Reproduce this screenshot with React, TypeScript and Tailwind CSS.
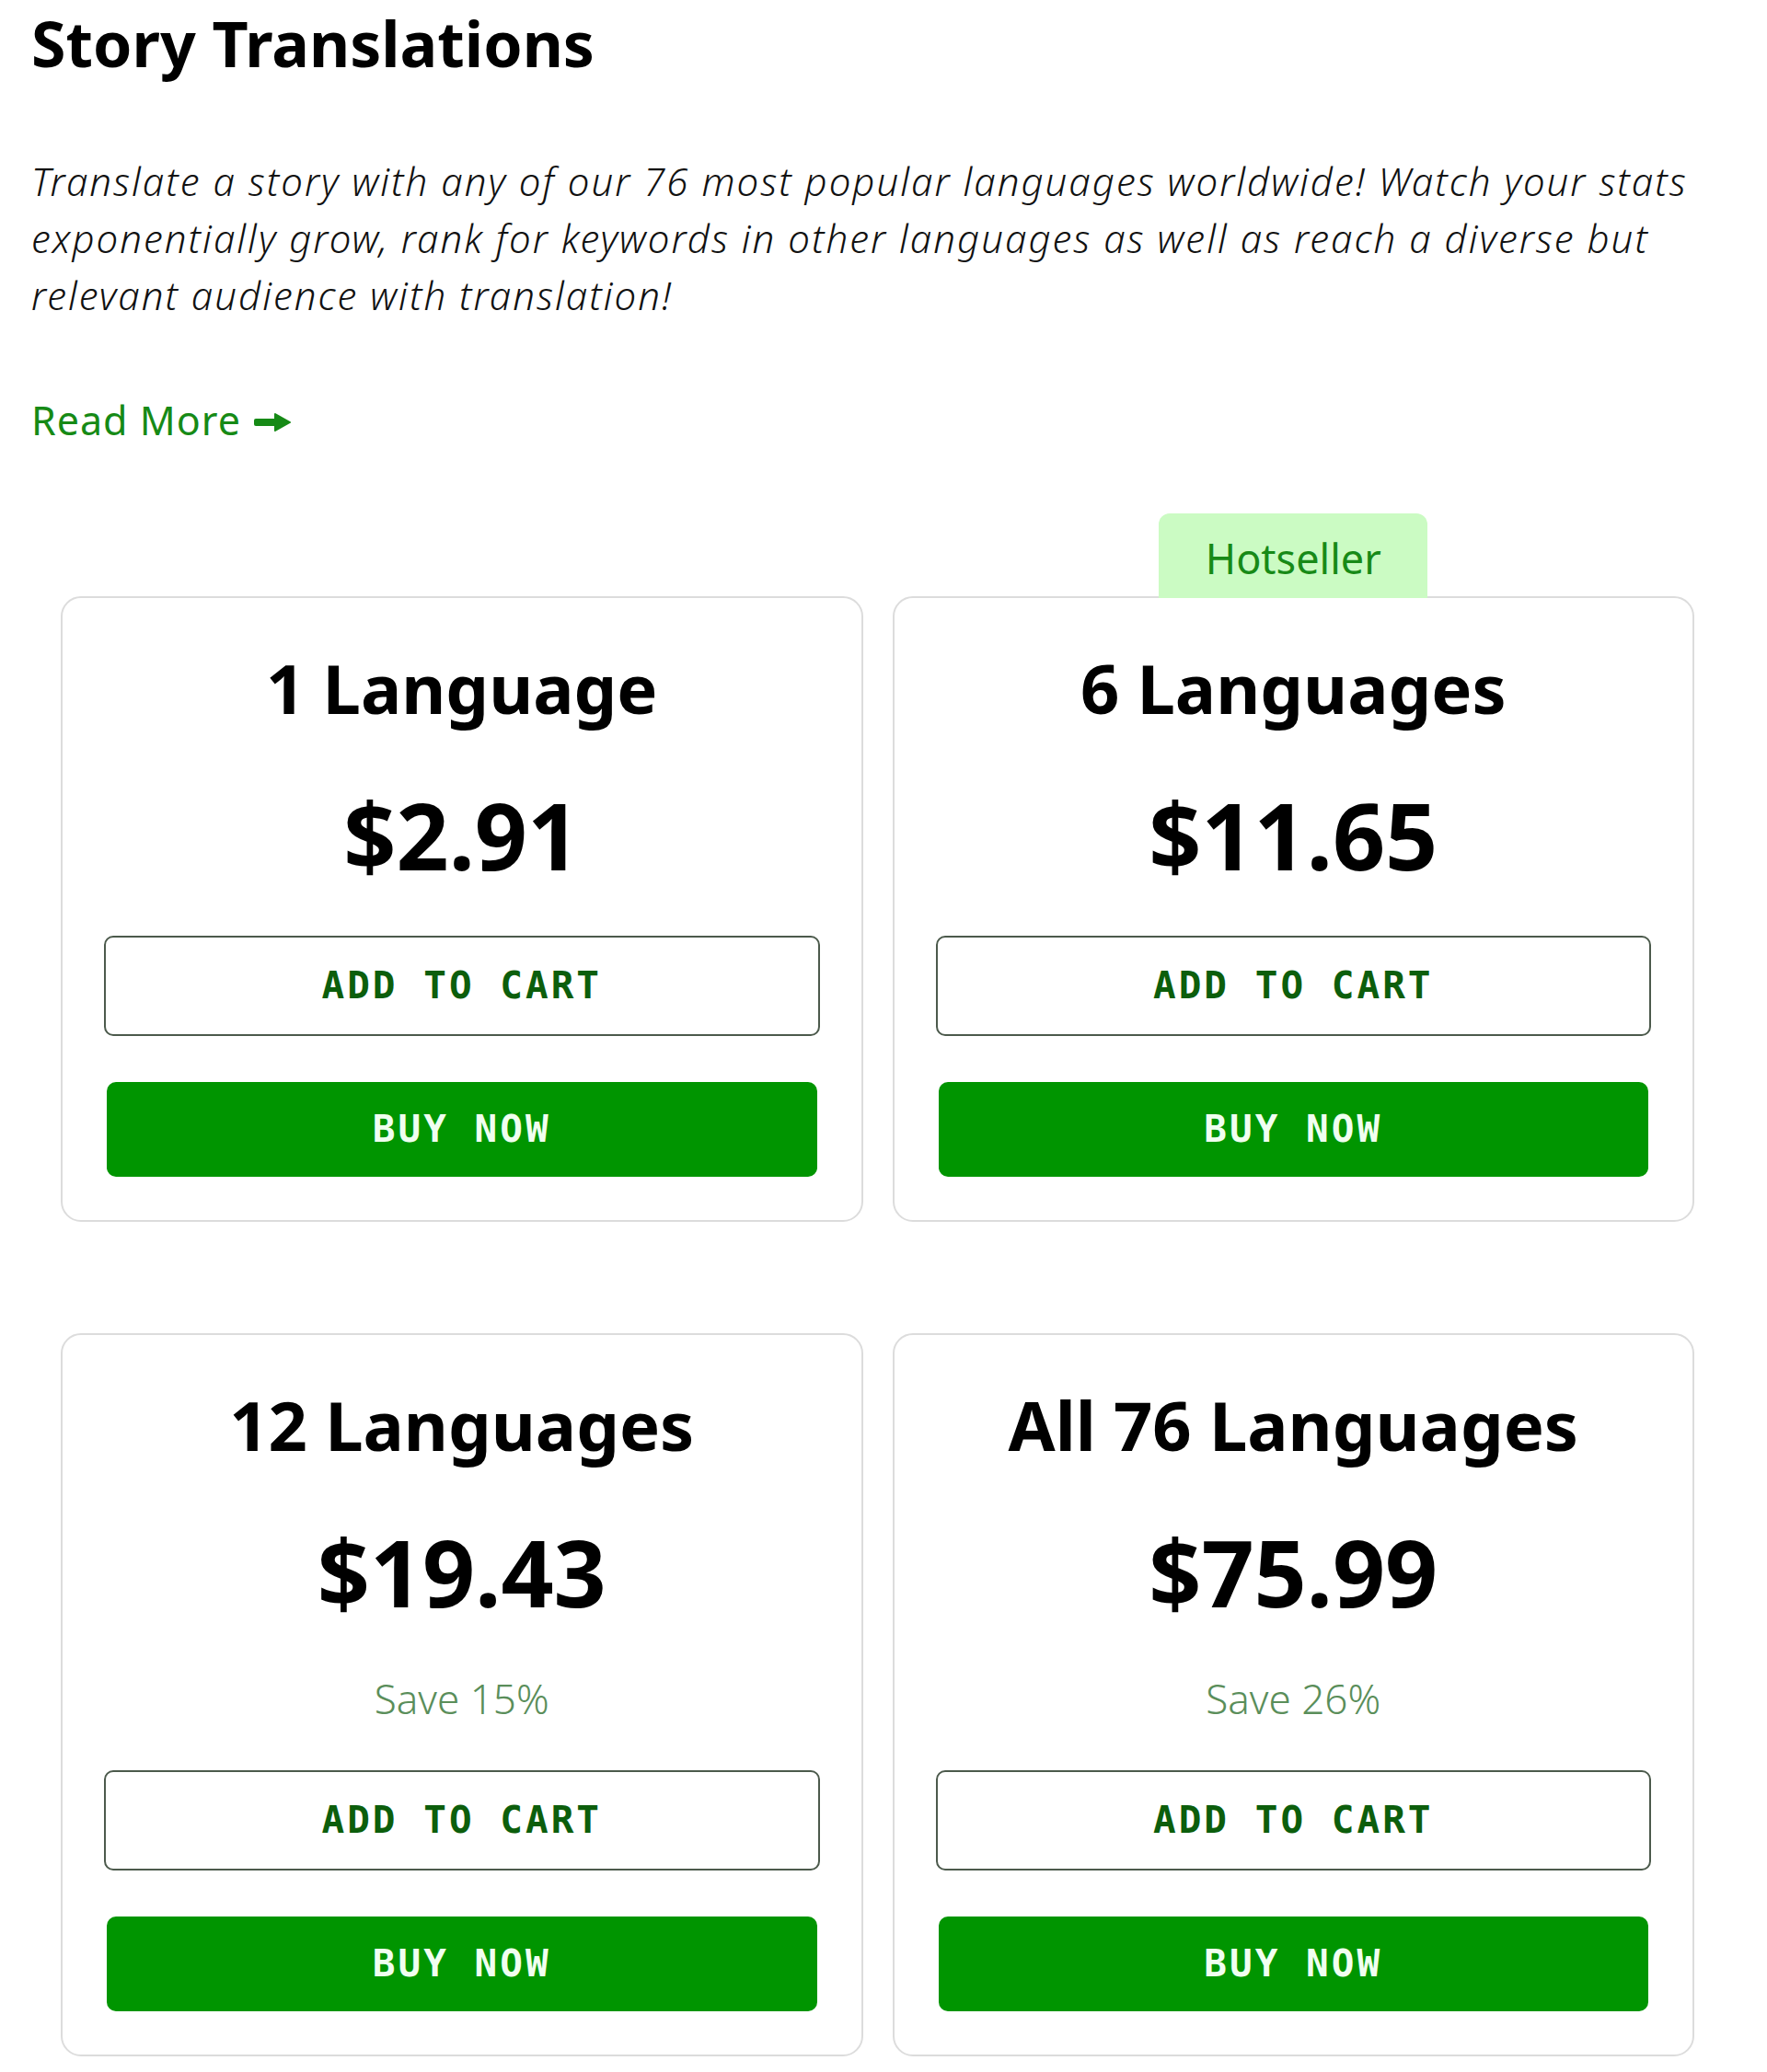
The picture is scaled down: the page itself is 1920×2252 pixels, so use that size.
import React from 'react';

interface Plan {
  title: string;
  price: string;
  save?: string;
  badge?: string;
}

const plans: Plan[] = [
  { title: '1 Language', price: '$2.91' },
  { title: '6 Languages', price: '$11.65', badge: 'Hotseller' },
  { title: '12 Languages', price: '$19.43', save: 'Save 15%' },
  { title: 'All 76 Languages', price: '$75.99', save: 'Save 26%' },
];

const sans = "font-['Noto_Sans','Open_Sans',sans-serif]";
const mono = "font-['DejaVu_Sans_Mono','Liberation_Mono',monospace]";

function ArrowRight() {
  return (
    <svg width="40" height="22" viewBox="0 0 40 22" className="ml-[14px] mt-[4px]">
      <rect x="0" y="7" width="25" height="8" rx="2" fill="#168a16" />
      <path d="M23 2 L39 11 L23 20 Z" fill="#168a16" strokeLinejoin="round" stroke="#168a16" strokeWidth="2" />
    </svg>
  );
}

function PlanCard({ plan }: { plan: Plan }) {
  return (
    <div className="relative flex flex-col items-center rounded-[22px] border-2 border-[#dcdcdc] bg-white px-[45px] pt-[53px] pb-[47px]">
      {/* badge sits on top of the card edge */}
      {plan.badge && (
        <div className="absolute left-1/2 top-[-92px] flex h-[92px] w-[292px] -translate-x-1/2 items-center justify-center rounded-t-[12px] bg-[#cbfbc3] pt-[4px]">
          <span className={`${sans} text-[45px] leading-none text-[#178a17]`}>{plan.badge}</span>
        </div>
      )}

      <h2 className={`${sans} text-[74px] leading-[90px] font-bold text-black`}>{plan.title}</h2>

      <div className="mt-[54px] flex w-full flex-col items-center gap-[50px]">
        <p className={`${sans} text-[100px] leading-[120px] font-bold text-black`}>{plan.price}</p>

        {plan.save && (
          <p className={`${sans} text-[44px] leading-[56px] font-light text-[#5a8e5a]`}>{plan.save}</p>
        )}

        <button className="flex h-[109px] w-full items-center justify-center rounded-[10px] border-2 border-[#4c5a4c] bg-white">
          <span className={`${mono} text-[41px] font-bold tracking-[3px] text-[#0c5e0c]`}>ADD TO CART</span>
        </button>

        <button className="mx-[3px] flex h-[103px] w-[calc(100%-6px)] items-center justify-center rounded-[10px] bg-[#009500]">
          <span className={`${mono} text-[41px] font-bold tracking-[3px] text-[#f0fff0]`}>BUY NOW</span>
        </button>
      </div>
    </div>
  );
}

export default function App() {
  return (
    <div className="min-h-[2252px] w-[1920px] bg-white pl-[34px] pt-[5px]">
      <div className="w-[1839px]">
        <h1 className={`${sans} text-[68px] leading-[84px] font-bold text-black`}>Story Translations</h1>

        <p className={`${sans} mt-[77px] text-[42px] leading-[62px] font-light italic tracking-[2px] text-[#111]`}>
          Translate a story with any of our 76 most popular languages worldwide! Watch your stats exponentially grow,
          rank for keywords in other languages as well as reach a diverse but relevant audience with translation!
        </p>

        <a href="#" className={`${sans} mt-[80px] flex w-fit items-center text-[43px] leading-[50px] tracking-[1px] text-[#168a16]`}>
          Read More
          <ArrowRight />
        </a>

        <div className="mx-[32px] mt-[166px] grid grid-cols-2 gap-x-[32px] gap-y-[121px]">
          {plans.map((p) => (
            <PlanCard key={p.title} plan={p} />
          ))}
        </div>
      </div>
    </div>
  );
}
